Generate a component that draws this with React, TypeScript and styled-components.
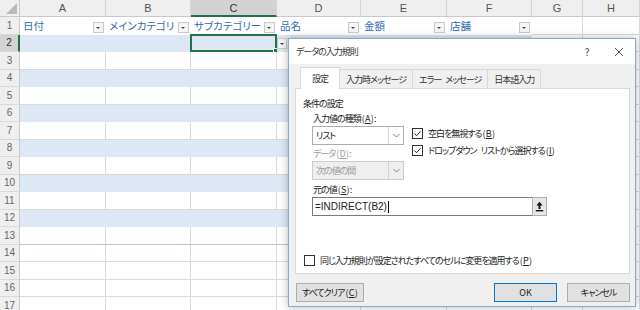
import { Fragment } from 'react';
import styled, { createGlobalStyle, css } from 'styled-components';

type Column = {
  key: string;
  width: number;
  title?: string;
};

type CellKind = 'title' | 'band' | 'plain';

const COLUMNS: Column[] = [
  { key: 'A', width: 86, title: '日付' },
  { key: 'B', width: 85, title: 'メインカテゴリ' },
  { key: 'C', width: 86, title: 'サブカテゴリー' },
  { key: 'D', width: 84, title: '品名' },
  { key: 'E', width: 86, title: '金額' },
  { key: 'F', width: 85, title: '店舗' },
  { key: 'G', width: 51 },
  { key: 'H', width: 57 }
];

const ROW_COUNT = 17;
const TABLE_LAST_ROW = 13;
const TABLE_COLUMNS = 6;
const SELECTED = { row: 2, col: 2 };

const GRID = '#dadada';
const BAND = '#dde8f4';
const EXCEL_GREEN = '#217346';

const GlobalStyle = createGlobalStyle`
  html, body {
    margin: 0;
    padding: 0;
    background: #fff;
  }
  body {
    font-family: "Liberation Sans", "Noto Sans CJK JP", sans-serif;
  }
`;

function CheckMark() {
  return (
    <svg width="9" height="9" viewBox="0 0 9 9">
      <polyline
        points="1.5,4.6 3.6,6.7 7.6,2.2"
        fill="none"
        stroke="#222"
        strokeWidth="1"
      />
    </svg>
  );
}

function Chevron() {
  return (
    <svg width="7" height="5" viewBox="0 0 7 5">
      <polyline points="0.5,1 3.5,4 6.5,1" fill="none" stroke="#777" strokeWidth="0.9" />
    </svg>
  );
}

function CollapseIcon() {
  return (
    <svg width="9" height="11" viewBox="0 0 9 11">
      <path d="M4.5 0.8 L1.4 4.4 H3.5 V8 H5.5 V4.4 H7.6 Z" fill="#111" />
      <rect x="0.8" y="9" width="7.4" height="1.4" fill="#111" />
    </svg>
  );
}

function CloseIcon() {
  return (
    <svg width="10" height="10" viewBox="0 0 10 10">
      <path d="M1 1 L9 9 M9 1 L1 9" stroke="#444" strokeWidth="0.9" />
    </svg>
  );
}

// (X) のアクセスキー表記
function Key({ k }: { k: string }) {
  return (
    <Accel>
      (<u>{k}</u>)
    </Accel>
  );
}

function App() {
  const columnTemplate = `20px ${COLUMNS.map((col) => `${col.width}px`).join(' ')}`;
  const rows = Array.from({ length: ROW_COUNT }, (_, i) => i + 1);

  return (
    <Page>
      <GlobalStyle />
      <Sheet $columns={columnTemplate}>
        <Corner />
        {COLUMNS.map((col, c) => (
          <ColHeader key={col.key} $active={c === SELECTED.col}>
            {col.key}
          </ColHeader>
        ))}
        {rows.map((row) => (
          <Fragment key={row}>
            <RowHeader $active={row === SELECTED.row}>{row}</RowHeader>
            {COLUMNS.map((col, c) => {
              const inTable = c < TABLE_COLUMNS && row <= TABLE_LAST_ROW;
              let kind: CellKind = 'plain';
              if (inTable && row === 1) kind = 'title';
              else if (inTable && row % 2 === 0) kind = 'band';
              const isSelected = row === SELECTED.row && c === SELECTED.col;

              return (
                <Cell
                  key={col.key}
                  $kind={kind}
                  $tableBottom={inTable && row === TABLE_LAST_ROW}
                >
                  {kind === 'title' && (
                    <>
                      <HeaderText>{col.title}</HeaderText>
                      <FilterButton />
                    </>
                  )}
                  {isSelected && (
                    <>
                      <Selection />
                      <FillHandle />
                      <ValidationArrow />
                    </>
                  )}
                </Cell>
              );
            })}
          </Fragment>
        ))}
      </Sheet>

      <Dialog>
        <TitleBar>
          <Title>データの入力規則</Title>
          <TitleButton>?</TitleButton>
          <TitleButton>
            <CloseIcon />
          </TitleButton>
        </TitleBar>
        <DialogBody>
          <TabStrip>
            <Tab $active>設定</Tab>
            <Tab>入力時メッセージ</Tab>
            <Tab>エラー メッセージ</Tab>
            <Tab>日本語入力</Tab>
          </TabStrip>
          <TabPanel>
            <SectionTitle>条件の設定</SectionTitle>
            <Conditions>
              <FieldColumn>
                <FieldLabel>
                  入力値の種類<Key k="A" />:
                </FieldLabel>
                <Select>
                  <SelectValue>リスト</SelectValue>
                  <SelectArrow>
                    <Chevron />
                  </SelectArrow>
                </Select>
                <FieldLabel $disabled>
                  データ<Key k="D" />:
                </FieldLabel>
                <Select $disabled>
                  <SelectValue>次の値の間</SelectValue>
                  <SelectArrow>
                    <Chevron />
                  </SelectArrow>
                </Select>
              </FieldColumn>
              <OptionColumn>
                <CheckRow>
                  <CheckBox>
                    <CheckMark />
                  </CheckBox>
                  <span>
                    空白を無視する<Key k="B" />
                  </span>
                </CheckRow>
                <CheckRow>
                  <CheckBox>
                    <CheckMark />
                  </CheckBox>
                  <span>
                    ドロップダウン リストから選択する<Key k="I" />
                  </span>
                </CheckRow>
              </OptionColumn>
            </Conditions>
            <FieldLabel>
              元の値<Key k="S" />:
            </FieldLabel>
            <SourceField>
              <SourceInput>
                =INDIRECT(B2)
                <Caret />
              </SourceInput>
              <CollapseButton>
                <CollapseIcon />
              </CollapseButton>
            </SourceField>
            <CheckRow $apply>
              <CheckBox />
              <span>
                同じ入力規則が設定されたすべてのセルに変更を適用する<Key k="P" />
              </span>
            </CheckRow>
          </TabPanel>
          <ButtonRow>
            <DialogButton>
              すべてクリア<Key k="C" />
            </DialogButton>
            <DialogButton $primary>OK</DialogButton>
            <DialogButton>キャンセル</DialogButton>
          </ButtonRow>
        </DialogBody>
      </Dialog>
    </Page>
  );
}

const Page = styled.div`
  position: relative;
  width: 640px;
  height: 310px;
  overflow: hidden;
  background: #fff;
`;

const Sheet = styled.div<{ $columns: string }>`
  display: grid;
  grid-template-columns: ${({ $columns }) => $columns};
  grid-template-rows: 17px repeat(${ROW_COUNT}, 17.5px);
`;

const headerBase = css`
  box-sizing: border-box;
  background: #efefef;
  color: #555;
  display: flex;
  align-items: center;
  justify-content: center;
`;

const Corner = styled.div`
  ${headerBase}
  position: relative;
  border-right: 1px solid #c9c9c9;
  border-bottom: 1px solid #c9c9c9;

  &::after {
    content: '';
    position: absolute;
    right: 2px;
    bottom: 2px;
    border-left: 11px solid transparent;
    border-bottom: 11px solid #b9b9b9;
  }
`;

const ColHeader = styled.div<{ $active?: boolean }>`
  ${headerBase}
  font-size: 11px;
  border-right: 1px solid #d4d4d4;
  border-bottom: 1px solid #c9c9c9;
  ${({ $active }) =>
    $active &&
    css`
      background: #d3d3d3;
      color: #333;
      border-bottom: 2px solid ${EXCEL_GREEN};
    `}
`;

const RowHeader = styled.div<{ $active?: boolean }>`
  ${headerBase}
  font-size: 10px;
  color: #666;
  border-right: 1px solid #c9c9c9;
  border-bottom: 1px solid #d9d9d9;
  ${({ $active }) =>
    $active &&
    css`
      background: #d3d3d3;
      color: #333;
      border-right: 2px solid ${EXCEL_GREEN};
    `}
`;

const Cell = styled.div<{ $kind: CellKind; $tableBottom?: boolean }>`
  position: relative;
  box-sizing: border-box;
  min-width: 0;
  display: flex;
  align-items: center;
  border-right: 1px solid ${GRID};
  border-bottom: 1px solid ${GRID};
  background: #fff;

  ${({ $kind }) =>
    $kind === 'band' &&
    css`
      background: ${BAND};
      border-right-color: ${BAND};
      border-bottom-color: ${BAND};
    `}

  ${({ $kind }) =>
    $kind === 'title' &&
    css`
      border-right-color: #fff;
      border-bottom-color: #fff;
      padding-left: 3px;
    `}

  ${({ $tableBottom }) =>
    $tableBottom &&
    css`
      border-bottom-color: #b3c6dc;
    `}
`;

const HeaderText = styled.span`
  flex: 1;
  min-width: 0;
  overflow: hidden;
  white-space: nowrap;
  font-family: "Noto Sans CJK JP", sans-serif;
  font-feature-settings: "palt";
  font-size: 10.5px;
  color: #2f6bb0;
`;

const FilterButton = styled.span`
  position: relative;
  flex: none;
  width: 9px;
  height: 9px;
  margin: 0 1px 0 1px;
  align-self: flex-end;
  margin-bottom: 1px;
  border: 1px solid #c9c9c9;
  background: #f6f6f6;

  &::after {
    content: '';
    position: absolute;
    left: 2px;
    top: 4px;
    border-left: 2.5px solid transparent;
    border-right: 2.5px solid transparent;
    border-top: 2.5px solid #444;
  }
`;

const Selection = styled.span`
  position: absolute;
  left: -1px;
  top: -1px;
  right: -1px;
  bottom: -1px;
  border: 2px solid ${EXCEL_GREEN};
  pointer-events: none;
`;

const FillHandle = styled.span`
  position: absolute;
  right: -4px;
  bottom: -4px;
  width: 5px;
  height: 5px;
  background: ${EXCEL_GREEN};
  border: 1px solid #fff;
`;

const ValidationArrow = styled.span`
  position: absolute;
  left: calc(100% + 1px);
  top: 3px;
  width: 10px;
  height: 11px;
  box-sizing: border-box;
  border: 1px solid #c9c9c9;
  background: #f3f3f3;
  z-index: 1;

  &::after {
    content: '';
    position: absolute;
    left: 2px;
    top: 4px;
    border-left: 2.5px solid transparent;
    border-right: 2.5px solid transparent;
    border-top: 2.5px solid #444;
  }
`;

const Dialog = styled.div`
  position: absolute;
  left: 288px;
  top: 38px;
  width: 348px;
  box-sizing: border-box;
  border: 1px solid #8ea8cc;
  background: #f0f0f0;
  box-shadow: 0 0 8px rgba(0, 0, 0, 0.28);
  font-family: "Noto Sans CJK JP", "Liberation Sans", sans-serif;
  font-feature-settings: "palt";
  font-size: 9px;
  letter-spacing: -1px;
  word-spacing: 3px;
  color: #222;
  z-index: 2;
`;

const Accel = styled.span`
  letter-spacing: 0.2px;
  margin-left: 1px;
`;

const TitleBar = styled.div`
  display: flex;
  align-items: center;
  height: 25px;
  padding-left: 7px;
  background: #fff;
`;

const Title = styled.span`
  flex: 1;
  color: #333;
`;

const TitleButton = styled.span`
  width: 32px;
  display: flex;
  align-items: center;
  justify-content: center;
  font-size: 10px;
  letter-spacing: 0;
  color: #444;
`;

const DialogBody = styled.div`
  padding: 3px 5px 4px 6px;
`;

const TabStrip = styled.div`
  display: flex;
  align-items: flex-end;
  height: 21px;
  padding-left: 5px;
`;

const Tab = styled.div<{ $active?: boolean }>`
  height: 19px;
  display: flex;
  align-items: center;
  padding: 0 6px;
  box-sizing: border-box;
  border: 1px solid #d9d9d9;
  border-bottom: none;
  border-left: none;
  background: #f0f0f0;
  color: #333;

  ${({ $active }) =>
    $active &&
    css`
      height: 22px;
      margin-bottom: -1px;
      padding: 0 11px;
      border-left: 1px solid #d9d9d9;
      background: #fff;
      position: relative;
      z-index: 1;
    `}
`;

const TabPanel = styled.div`
  box-sizing: border-box;
  height: 186px;
  border: 1px solid #d9d9d9;
  background: #fff;
  padding: 8px 8px 0 7px;
  display: flex;
  flex-direction: column;
`;

const SectionTitle = styled.div`
  line-height: 14px;
  margin-bottom: 1px;
`;

const Conditions = styled.div`
  display: flex;
  gap: 8px;
  padding-left: 9px;
`;

const FieldColumn = styled.div`
  width: 92px;
  display: flex;
  flex-direction: column;
`;

const FieldLabel = styled.div<{ $disabled?: boolean }>`
  line-height: 14px;
  padding-left: 1px;
  white-space: nowrap;
  color: ${({ $disabled }) => ($disabled ? '#9a9a9a' : '#222')};
  ${Conditions} + & {
    margin-left: 9px;
    margin-top: 1px;
  }
`;

const Select = styled.div<{ $disabled?: boolean }>`
  display: flex;
  height: 19px;
  box-sizing: border-box;
  border: 1px solid ${({ $disabled }) => ($disabled ? '#cccccc' : '#adadad')};
  background: ${({ $disabled }) => ($disabled ? '#efefef' : '#fff')};
  color: ${({ $disabled }) => ($disabled ? '#9a9a9a' : '#222')};
  margin-bottom: 2px;
`;

const SelectValue = styled.span`
  flex: 1;
  display: flex;
  align-items: center;
  padding-left: 3px;
`;

const SelectArrow = styled.span`
  width: 14px;
  display: flex;
  align-items: center;
  justify-content: center;
  border-left: 1px solid #d4d4d4;
`;

const OptionColumn = styled.div`
  padding-top: 15px;
  display: flex;
  flex-direction: column;
  gap: 4px;
`;

const CheckRow = styled.label<{ $apply?: boolean }>`
  display: flex;
  align-items: center;
  gap: 5px;
  height: 13px;
  white-space: nowrap;

  ${({ $apply }) =>
    $apply &&
    css`
      margin-top: 37px;
      margin-left: 1px;
      height: 14px;
    `}
`;

const CheckBox = styled.span`
  width: 9px;
  height: 9px;
  flex: none;
  border: 1px solid #333;
  background: #fff;
  display: flex;
  align-items: center;
  justify-content: center;
  & > svg {
    display: block;
  }
`;

const SourceField = styled.div`
  display: flex;
  height: 19px;
  width: 235px;
  margin-left: 9px;
`;

const SourceInput = styled.div`
  flex: 1;
  display: flex;
  align-items: center;
  box-sizing: border-box;
  border: 1px solid #7a7a7a;
  border-right: none;
  padding-left: 2px;
  font-family: "Liberation Sans", sans-serif;
  font-size: 10px;
  letter-spacing: 0;
  color: #222;
`;

const Caret = styled.span`
  width: 1px;
  height: 12px;
  background: #111;
  margin-left: 1px;
`;

const CollapseButton = styled.span`
  width: 15px;
  box-sizing: border-box;
  border: 1px solid #adadad;
  background: #e6e6e6;
  display: flex;
  align-items: center;
  justify-content: center;
`;

const ButtonRow = styled.div`
  display: flex;
  gap: 10px;
  margin-top: 9px;
  padding-left: 1px;
`;

const DialogButton = styled.button<{ $primary?: boolean }>`
  height: 19px;
  min-width: 63px;
  padding: 0 5px;
  box-sizing: border-box;
  border: 1px solid ${({ $primary }) => ($primary ? '#0078d7' : '#adadad')};
  background: #e1e1e1;
  font: inherit;
  letter-spacing: ${({ $primary }) => ($primary ? '0' : '-1px')};
  font-feature-settings: "palt";
  color: #222;

  &:nth-child(2) {
    margin-left: auto;
  }
`;

export default App;
